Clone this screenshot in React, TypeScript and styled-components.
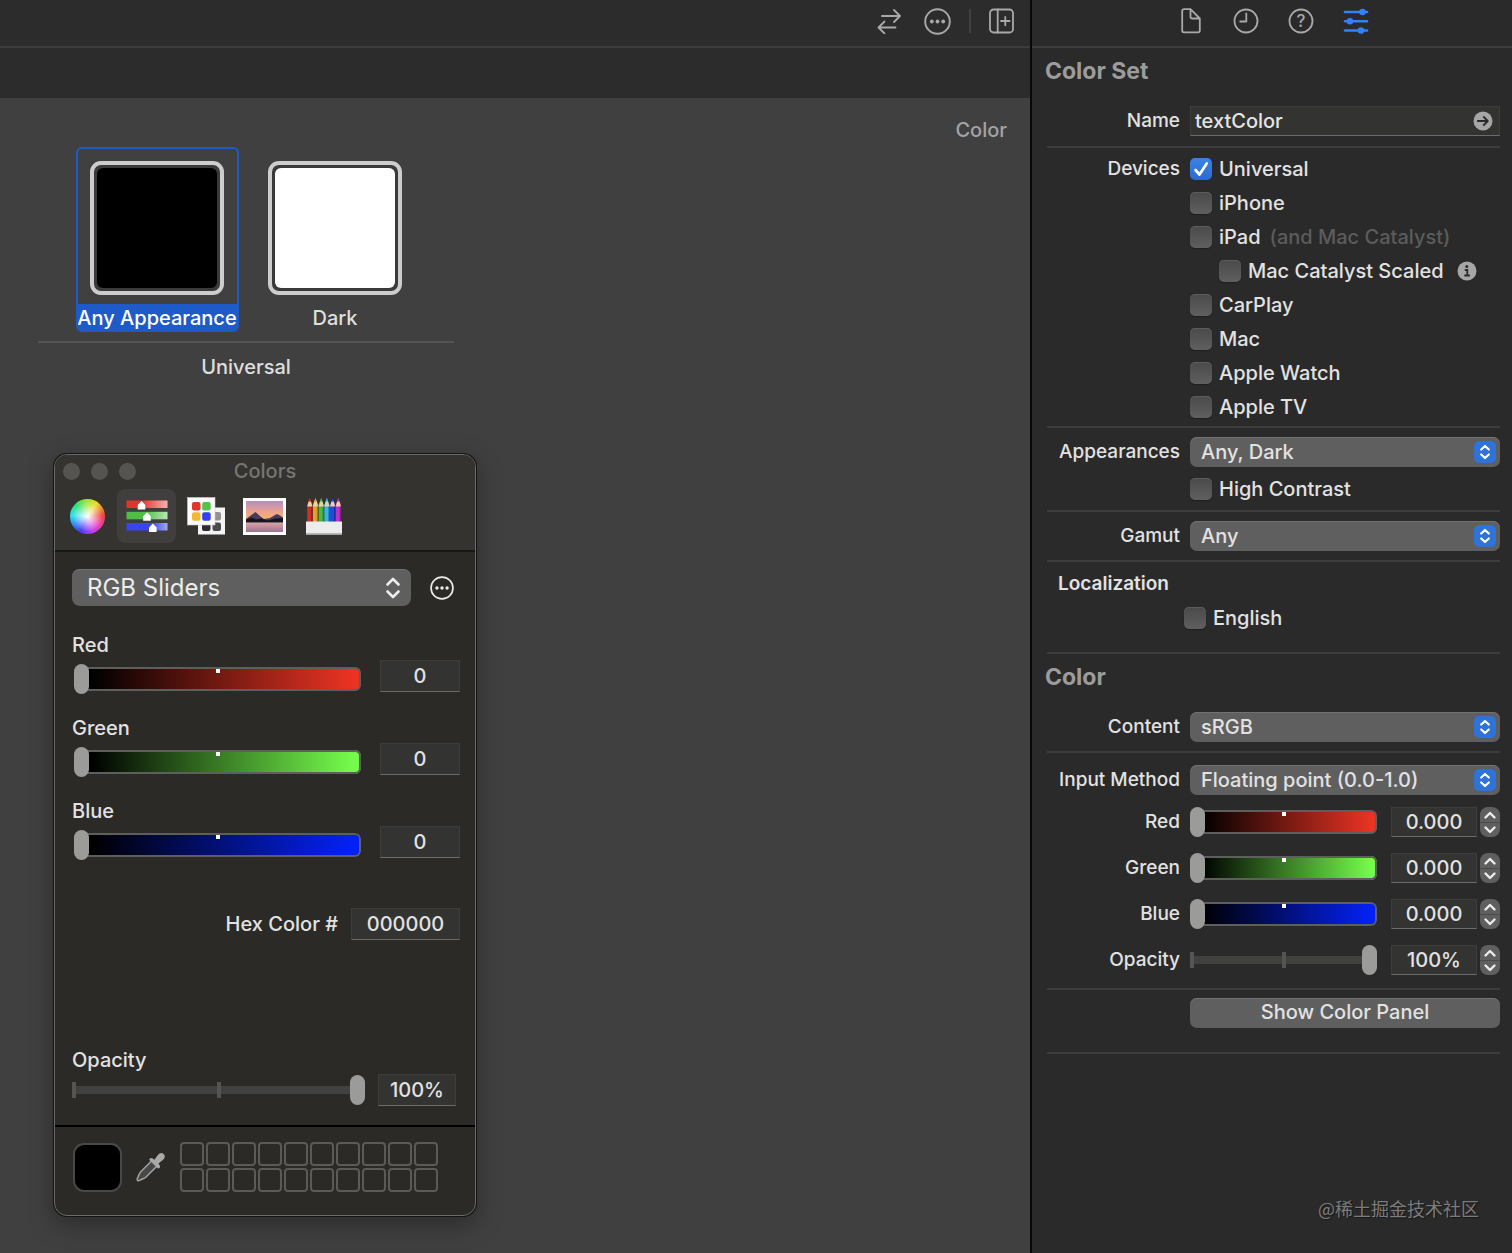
import React, { useId, useState } from "react";
import styled, { createGlobalStyle, css } from "styled-components";

const GlobalStyle = createGlobalStyle`
  *, *::before, *::after { box-sizing: border-box; }
  body {
    margin: 0;
    background: #404040;
    color: #e2e2e2;
    font-family: Inter, "Noto Sans CJK SC", "Liberation Sans", sans-serif;
    font-size: 20px;
    font-weight: 500;
    line-height: 24px;
  }
  button, input, select {
    margin: 0;
    padding: 0;
    border: 0;
    background: none;
    color: inherit;
    font: inherit;
  }
  svg { display: block; }
`;

/* ---------- Shell ---------- */

const Window = styled.div`
  display: flex;
  min-height: 100vh;
`;

const Editor = styled.main`
  flex: 1;
  min-width: 0;
  display: flex;
  flex-direction: column;
`;

const EditorToolbar = styled.header`
  display: flex;
  align-items: center;
  justify-content: flex-end;
  gap: 18px;
  height: 48px;
  padding: 0 16px 4px 16px;
  background: #2c2c2c;
  border-bottom: 2px solid #3c3c3c;
`;

const ToolbarDivider = styled.span`
  width: 2px;
  height: 24px;
  background: #404040;
`;

const JumpBar = styled.div`
  height: 50px;
  background: #2c2c2c;
`;

const Canvas = styled.section`
  flex: 1;
  background: #404040;
  padding-top: 20px;
`;

const CanvasTitle = styled.h1`
  margin: 0 23px 5px;
  text-align: right;
  font-size: 20px;
  font-weight: 500;
  line-height: 24px;
  color: #a3a3a3;
`;

const IconButton = styled.button<{ $width: number; $active?: boolean }>`
  display: flex;
  justify-content: center;
  width: ${(p) => p.$width}px;
  color: ${(p) => (p.$active ? "#3380f7" : "#a9a9a9")};
`;

/* ---------- Color wells ---------- */

const WellGroup = styled.div`
  width: 416px;
  margin-left: 38px;
  text-align: center;
`;

const WellRow = styled.div`
  display: flex;
  justify-content: center;
  gap: 15px;
  padding-bottom: 9px;
  border-bottom: 2px solid #555555;
`;

const Well = styled.button<{ $selected: boolean }>`
  display: flex;
  flex-direction: column;
  justify-content: space-between;
  align-items: center;
  width: 163px;
  height: 185px;
  padding-top: 12px;
  border: 2px solid ${(p) => (p.$selected ? "#1f5bc8" : "transparent")};
  border-bottom-width: 0;
  border-radius: 6px;
  overflow: hidden;
`;

const WellColor = styled.span<{ $color: string }>`
  width: 134px;
  height: 134px;
  padding: 3px;
  border: 4px solid #cdcdcd;
  border-radius: 11px;
  background: #3a3a3a;

  &::before {
    content: "";
    display: block;
    height: 100%;
    border-radius: 6px;
    background: ${(p) => p.$color};
  }
`;

const WellName = styled.span<{ $selected: boolean }>`
  display: flex;
  align-items: center;
  justify-content: center;
  align-self: stretch;
  height: 28px;
  white-space: nowrap;
  color: ${(p) => (p.$selected ? "#ffffff" : "#dedede")};
  background: ${(p) => (p.$selected ? "#1f5bc8" : "transparent")};
`;

const WellCaption = styled.p`
  margin: 12px 0 0;
  color: #dedede;
`;

/* ---------- Shared form controls ---------- */

const Stack = styled.span`
  display: grid;
  align-items: center;

  & > * { grid-area: 1 / 1; }
  & > svg { pointer-events: none; }
`;

const CheckInput = styled.input`
  appearance: none;
  width: 22px;
  height: 22px;
  border-radius: 5px;
  background: linear-gradient(#4a4a4a, #5f5f5f);
  box-shadow: inset 0 1px 0 #5c5c5c, 0 1px 1px #1f1f1f;

  &:checked {
    background: linear-gradient(#3a82e6, #2b6bd0);
    box-shadow: none;
  }
  &:not(:checked) + svg { visibility: hidden; }
`;

const CheckLabel = styled.label`
  display: inline-flex;
  align-items: center;
  gap: 7px;
  height: 34px;
  white-space: nowrap;
`;

const SelectInput = styled.select<{ $large?: boolean }>`
  appearance: none;
  width: 100%;
  height: ${(p) => (p.$large ? 37 : 30)}px;
  padding-left: ${(p) => (p.$large ? 15 : 11)}px;
  border-radius: ${(p) => (p.$large ? 8 : 7)}px;
  background: #5f5f5f;
  box-shadow: inset 0 1px 0 #727272;
  font-size: ${(p) => (p.$large ? 24 : 20)}px;
  font-weight: ${(p) => (p.$large ? 400 : 500)};
`;

const SelectBadge = styled.svg`
  justify-self: end;
  margin-right: 4px;
`;

const fieldLook = css`
  border: 1px solid #3d3d3c;
  border-bottom: 1px solid #6c6c6a;
  background: #333332;
`;

const ValueInput = styled.input<{ $width: number; $height: number }>`
  ${fieldLook}
  width: ${(p) => p.$width}px;
  height: ${(p) => p.$height}px;
  text-align: center;
`;

const thumb = css`
  appearance: none;
  width: 15px;
  height: 30px;
  border-radius: 8px;
  background: #9b9b9a;
`;

const ColorRange = styled.input<{ $to: string }>`
  appearance: none;
  flex: 1;
  min-width: 0;
  height: 30px;

  &::-webkit-slider-runnable-track {
    height: 24px;
    border-radius: 6px;
    background:
      linear-gradient(#ffffff, #ffffff) center top / 4px 6px no-repeat,
      linear-gradient(to right, #000000 6%, ${(p) => p.$to} 97%);
    box-shadow: inset 0 0 0 2px #5e5e5c;
  }
  &::-webkit-slider-thumb {
    ${thumb}
    margin-top: -3px;
  }
`;

const OpacityRange = styled.input`
  appearance: none;
  flex: 1;
  min-width: 0;
  height: 30px;

  &::-webkit-slider-runnable-track {
    height: 16px;
    background:
      linear-gradient(#545453, #545453) left center / 4px 16px no-repeat,
      linear-gradient(#545453, #545453) center / 4px 16px no-repeat,
      linear-gradient(#414140, #414140) center / 100% 8px no-repeat;
  }
  &::-webkit-slider-thumb {
    ${thumb}
    margin-top: -7px;
  }
`;

/* ---------- Colors panel ---------- */

const Panel = styled.section`
  width: 422px;
  margin: 75px 0 37px 54px;
  border: 1px solid #6a6a67;
  border-radius: 13px;
  background: #2b2a27;
  box-shadow: 0 0 0 1px #141414, 0 8px 26px rgba(0, 0, 0, 0.35);
  overflow: hidden;
`;

const PanelHeader = styled.header`
  padding-bottom: 7px;
  background: #343330;
  border-bottom: 2px solid #161614;
`;

const TitleBar = styled.div`
  display: grid;
  grid-template-columns: 1fr auto 1fr;
  align-items: center;
  height: 32px;
  padding: 0 8px;
  margin-bottom: 2px;
`;

const TrafficLights = styled.div`
  display: flex;
  gap: 11px;
`;

const TrafficLight = styled.button`
  width: 17px;
  height: 17px;
  border-radius: 50%;
  background: #555451;
`;

const PanelTitle = styled.h2`
  margin: 0;
  font-size: 20px;
  font-weight: 500;
  line-height: 24px;
  color: #767573;
`;

const ModeTabs = styled.div`
  display: flex;
  padding-left: 3px;
`;

const ModeTab = styled.button<{ $active: boolean }>`
  display: flex;
  align-items: center;
  justify-content: center;
  width: 59px;
  height: 54px;
  border-radius: 8px;
  background: ${(p) => (p.$active ? "#403f3d" : "transparent")};
`;

const Wheel = styled.span`
  width: 35px;
  height: 35px;
  border-radius: 50%;
  background:
    radial-gradient(circle, #ffffff 0%, rgba(255, 255, 255, 0.65) 22%, rgba(255, 255, 255, 0) 62%),
    conic-gradient(from 0deg, #a5e52c, #f0d82c 35deg, #f0453a 85deg, #ee3ba8 125deg, #c93cf0 160deg, #4a3cf2 205deg, #2f8cf5 240deg, #2fe3e8 275deg, #2fe07a 315deg, #a5e52c 360deg);
`;

const PanelBody = styled.div`
  padding: 17px 15px 19px 17px;
  border-bottom: 2px solid #000000;
`;

const ModeRow = styled.div`
  display: flex;
  align-items: center;
  gap: 19px;
  padding-right: 6px;
  margin-bottom: 27px;
  color: #ececea;

  & > ${Stack} { flex: 1; }
`;

const Channels = styled.div`
  display: grid;
  gap: 22px;
`;

const ChannelLabel = styled.label`
  display: block;
`;

const ChannelRow = styled.div`
  display: flex;
  align-items: flex-start;
  gap: 19px;
  padding-left: 2px;
  margin-top: 3px;

  & > ${ColorRange} { align-self: flex-end; margin-top: 4px; }
`;

const HexRow = styled.div`
  display: flex;
  align-items: center;
  justify-content: flex-end;
  gap: 13px;
  margin: 48px 0 108px;
`;

const OpacityRow = styled.div`
  display: flex;
  align-items: center;
  gap: 13px;
  padding-right: 4px;
  margin-top: 2px;
`;

const PanelFooter = styled.footer`
  display: flex;
  align-items: center;
  gap: 14px;
  padding: 15px 18px 23px;
`;

const CurrentColor = styled.button`
  width: 49px;
  height: 49px;
  border: 2px solid #484846;
  border-radius: 11px;
  background: #000000;
`;

const SavedColors = styled.div`
  display: grid;
  grid-template-columns: repeat(10, 24px);
  gap: 2px;
`;

const SavedColor = styled.button`
  height: 24px;
  border: 2px solid #5a5a57;
  border-radius: 4px;
`;

/* ---------- Inspector ---------- */

const Inspector = styled.aside`
  display: flex;
  flex-direction: column;
  width: 482px;
  border-left: 2px solid #080808;
  background: #2a2a2a;
`;

const InspectorTabs = styled.nav`
  display: flex;
  align-items: center;
  justify-content: center;
  gap: 23px;
  height: 48px;
  padding: 0 0 4px 2px;
  border-bottom: 2px solid #3c3c3c;
`;

const InspectorHeading = styled.h2`
  margin: 0;
  padding-left: 13px;
  font-size: 23px;
  font-weight: 700;
  line-height: 46px;
  color: #9c9c9c;
`;

const Section = styled.div<{ $top: number; $bottom: number }>`
  margin: 0 12px 0 15px;
  padding: ${(p) => p.$top}px 0 ${(p) => p.$bottom}px;
  border-bottom: 2px solid #3d3d3d;
`;

const Row = styled.div<{ $spaceTop?: number }>`
  display: grid;
  grid-template-columns: 133px minmax(0, 1fr);
  column-gap: 10px;
  margin-top: ${(p) => p.$spaceTop ?? 0}px;
`;

const RowLabel = styled.label<{ $height: number }>`
  font-size: 19px;
  line-height: ${(p) => p.$height}px;
  text-align: right;
  white-space: nowrap;
`;

const CheckList = styled.div`
  display: flex;
  flex-direction: column;
  align-items: flex-start;
`;

const CheckItem = styled.div<{ $nested?: boolean }>`
  display: flex;
  align-items: center;
  gap: ${(p) => (p.$nested ? 13 : 9)}px;
  padding-left: ${(p) => (p.$nested ? 29 : 0)}px;
  white-space: nowrap;
`;

const Hint = styled.span`
  color: #5c5c5c;
`;

const NameField = styled.div`
  ${fieldLook}
  display: flex;
  align-items: center;
  height: 30px;
  padding: 0 6px 0 4px;
  color: #a6a6a6;
`;

const NameInput = styled.input`
  flex: 1;
  min-width: 0;
  color: #e4e4e4;
`;

const LocalizationTitle = styled.h3`
  margin: 0;
  padding-left: 11px;
  font-size: 19px;
  font-weight: 600;
  line-height: 34px;
`;

const LanguageRow = styled.div`
  display: flex;
  padding-left: 137px;
`;

const ValueRow = styled.div`
  display: flex;
  align-items: center;
`;

const ValueGroup = styled.div`
  display: flex;
  gap: 3px;
  margin-left: 14px;
`;

const Stepper = styled.div`
  display: grid;
  grid-template-rows: 15px 15px;
  width: 20px;
  border-radius: 8px;
  overflow: hidden;
`;

const StepButton = styled.button`
  display: grid;
  place-items: center;
  background: #5f5f5f;
  color: #ececec;

  & + & { border-top: 1px solid #4a4a4a; }
`;

const PushButton = styled.button`
  height: 30px;
  padding-bottom: 3px;
  border-radius: 7px;
  background: #5f5f5f;
  box-shadow: inset 0 1px 0 #727272;
`;

const Watermark = styled.p`
  margin: auto 33px 33px;
  text-align: right;
  font-family: "Noto Sans CJK SC", sans-serif;
  font-size: 18px;
  font-weight: 400;
  color: #7c7c7c;
  text-shadow: 1px 1px 1px #161616;
`;

/* ---------- Icons ---------- */

const line = { fill: "none", stroke: "currentColor", strokeWidth: 2, strokeLinecap: "round", strokeLinejoin: "round" } as const;

const SwapIcon = () => (
  <svg width="29" height="26" viewBox="0 0 29 26" {...line} strokeWidth={1.8}>
    <path d="M5 8h18M17 2l6 6-6 6M18.500 19.500H1.500M7.500 13.500l-6 6 6 6" />
  </svg>
);

const EllipsisIcon = ({ size }: { size: number }) => (
  <svg width={size} height={size} viewBox="0 0 27 27" {...line}>
    <circle cx="13.500" cy="13.500" r="12.300" strokeWidth={1.900} />
    <g fill="currentColor" stroke="none">
      <circle cx="7.800" cy="13.500" r="1.900" />
      <circle cx="13.500" cy="13.500" r="1.900" />
      <circle cx="19.200" cy="13.500" r="1.900" />
    </g>
  </svg>
);

const AddPaneIcon = () => (
  <svg width="25" height="26" viewBox="0 0 25 26" {...line} strokeWidth={1.8}>
    <rect x="1" y="1.500" width="23" height="23" rx="3.500" />
    <path d="M8.700 1.500v23M16.300 8.800v8.500M12 13h8.600" />
  </svg>
);

const FileIcon = () => (
  <svg width="20" height="26" viewBox="0 0 20 26" {...line} strokeWidth={1.800}>
    <path d="M9.500 1.200H3A1.800 1.800 0 0 0 1.200 3v19.500a1.800 1.800 0 0 0 1.800 1.800h14a1.800 1.800 0 0 0 1.800-1.800V10.500L9.500 1.200v7.500a1.800 1.800 0 0 0 1.800 1.800h7.500" />
  </svg>
);

const ClockIcon = () => (
  <svg width="26" height="26" viewBox="0 0 26 26" {...line} strokeWidth={1.800}>
    <circle cx="13" cy="13" r="11.500" />
    <path d="M13.300 5.500v8H7.200" />
  </svg>
);

const HelpIcon = () => (
  <svg width="26" height="26" viewBox="0 0 26 26">
    <circle cx="13" cy="13" r="11.500" fill="none" stroke="currentColor" strokeWidth="1.800" />
    <text x="13" y="19" textAnchor="middle" fontSize="17" fontWeight="500" fill="currentColor">?</text>
  </svg>
);

const AttributesIcon = () => (
  <svg width="26" height="26" viewBox="0 0 26 26" {...line} strokeWidth={2.600}>
    <path d="M2 4h22M2 13.200h22M2 22.500h22" />
    <g fill="currentColor" stroke="none">
      <circle cx="19.500" cy="4" r="3.300" />
      <circle cx="7" cy="13.200" r="3.300" />
      <circle cx="18" cy="22.500" r="3.300" />
    </g>
  </svg>
);

const GoIcon = () => (
  <svg width="20" height="20" viewBox="0 0 20 20">
    <circle cx="10" cy="10" r="9.500" fill="currentColor" />
    <path d="M4.800 10h10M10.800 6l4 4-4 4" fill="none" stroke="#2a2a2a" strokeWidth="1.800" strokeLinecap="round" strokeLinejoin="round" />
  </svg>
);

const InfoIcon = () => (
  <svg width="20" height="20" viewBox="0 0 20 20">
    <circle cx="10" cy="10" r="9.500" fill="#a6a6a6" />
    <circle cx="9.800" cy="5.600" r="1.500" fill="#2a2a2a" />
    <path d="M7.800 9h2.500v5.200M7.300 14.500h5.600" fill="none" stroke="#2a2a2a" strokeWidth="1.800" />
  </svg>
);

const CheckMark = () => (
  <svg width="22" height="22" viewBox="0 0 22 22" {...line} stroke="#ffffff" strokeWidth={2.700}>
    <path d="M5.500 12l4 4.500 7.200-11" />
  </svg>
);

const BlueChevrons = () => (
  <SelectBadge width="22" height="22" viewBox="0 0 22 22">
    <rect width="22" height="22" rx="5" fill="#2f72d8" />
    <path d="M7.200 8.500l3.800-3.500 3.800 3.500M7.200 13.500l3.800 3.500 3.800-3.500" {...line} stroke="#ffffff" strokeWidth={2.200} />
  </SelectBadge>
);

const PlainChevrons = () => (
  <SelectBadge width="28" height="24" viewBox="0 0 28 24">
    <path d="M8.500 8.500l5.500-5.500 5.500 5.500M8.500 15.500l5.500 5.500 5.500-5.500" {...line} stroke="#ececea" strokeWidth={2.600} />
  </SelectBadge>
);

const StepIcon = ({ up }: { up?: boolean }) => (
  <svg width="14" height="10" viewBox="0 0 14 10" {...line} strokeWidth={2.400}>
    <path d={up ? "M2.500 7.500L7 3l4.500 4.500" : "M2.500 2.500L7 7l4.500-4.500"} />
  </svg>
);

const SliderModeIcon = () => (
  <svg width="42" height="32" viewBox="0 0 42 32">
    <defs>
      <linearGradient id="modeRed"><stop offset=".35" stopColor="#e5322a" /><stop offset="1" stopColor="#f3b3b0" /></linearGradient>
      <linearGradient id="modeGreen"><stop offset=".45" stopColor="#50bd45" /><stop offset="1" stopColor="#b6e8b2" /></linearGradient>
      <linearGradient id="modeBlue"><stop offset=".6" stopColor="#3b45ee" /><stop offset="1" stopColor="#a3a8ec" /></linearGradient>
    </defs>
    <rect x="0.500" y="0.500" width="41" height="7.500" fill="url(#modeRed)" />
    <rect x="0.500" y="11.800" width="41" height="7.500" fill="url(#modeGreen)" />
    <rect x="0.500" y="23" width="41" height="7.500" fill="url(#modeBlue)" />
    <g fill="#ffffff">
      <path d="M15.500 1l3.800 4v4.500h-7.600V5z" />
      <path d="M21 12.300l3.800 4v4.500h-7.600v-4.500z" />
      <path d="M26.800 23.500l3.800 4V32H23v-4.500z" />
    </g>
  </svg>
);

const PaletteIcon = () => (
  <svg width="38" height="38" viewBox="0 0 38 38">
    <rect x="11" y="10.500" width="27" height="27" fill="#f4f4f4" />
    <rect x="15" y="25.500" width="8.500" height="8.500" rx="2" fill="#2d2d2d" />
    <rect x="25.500" y="25.500" width="8.500" height="8.500" rx="2" fill="#4a4a4a" />
    <rect x="25.500" y="15" width="8.500" height="8.500" rx="2" fill="#929292" />
    <rect x="0.500" y="0.500" width="27.500" height="27.500" fill="#fdfdfd" stroke="#c9c9c9" strokeWidth="0.600" />
    <rect x="5" y="5" width="8.500" height="8.500" rx="2" fill="#e2352b" />
    <rect x="15.200" y="5" width="8.500" height="8.500" rx="2" fill="#55c24a" />
    <rect x="5" y="15.200" width="8.500" height="8.500" rx="2" fill="#f3b831" />
    <rect x="15.200" y="15.200" width="8.500" height="8.500" rx="2" fill="#3442ee" />
  </svg>
);

const PhotoIcon = () => (
  <svg width="43" height="37" viewBox="0 0 43 37">
    <defs>
      <linearGradient id="sky" x2="0" y2="1"><stop offset="0" stopColor="#b08fc0" /><stop offset=".45" stopColor="#e9a093" /><stop offset=".9" stopColor="#fbb660" /></linearGradient>
      <linearGradient id="lake" x2="0" y2="1"><stop offset="0" stopColor="#dca3a6" /><stop offset="1" stopColor="#9d7391" /></linearGradient>
    </defs>
    <rect width="43" height="37" fill="#ffffff" />
    <rect x="3" y="3" width="37" height="22" fill="url(#sky)" />
    <path d="M3 21l4-3 5.500-4 5 4.500 3.500 2.500 6-1 5-3 2-1 3 1.500 3 2V25H3z" fill="#4a3a5c" />
    <path d="M3 21.500l6-2 4 2 5-1 7 2 7-2 8-.5v4.500H3z" fill="#15151f" />
    <rect x="3" y="24.500" width="37" height="9.500" fill="url(#lake)" />
  </svg>
);

const PENCILS = ["#cf2d27", "#e3a32b", "#4cb93c", "#35b6e2", "#2447e0", "#b933c9"];

const PencilsIcon = () => (
  <svg width="36" height="38" viewBox="0 0 36 38">
    {PENCILS.map((color, i) => (
      <g key={color} transform={`translate(${1.2 + i * 5.7} 0)`}>
        <path d="M2.600 1L5.200 8v17H0V8z" fill={color} />
        <path d="M1.500 4.200h2.200L5.200 9.500H0z" fill="#f0cfa4" />
        <path d="M2.600 1l1.200 3.500H1.400z" fill={color} />
        <path d="M4 9.500h1.200V25H4z" fill="#000000" opacity="0.300" />
      </g>
    ))}
    <rect x="0" y="24.500" width="36" height="13" fill="#ececec" />
    <rect x="0" y="36" width="36" height="1.500" fill="#b5b5b5" />
  </svg>
);

const EyedropperIcon = () => (
  <svg width="30" height="30" viewBox="0 0 30 30">
    <path d="M16 8.500L4.500 20c-1 1-1.500 2.800-2.200 4.200L1.200 27c-.4 1 .8 2.200 1.800 1.600l2.800-1.300c1.500-.7 3-1.100 4-2.100L21.500 13.500z" fill="#484846" stroke="#a3a3a1" strokeWidth="1.500" />
    <path d="M13.800 6.600c.8-.9 2-.9 2.900-.2l1.700 1.400 3.500-4.800c1.600-2.100 4-2.700 5.800-1 1.800 1.800 1.300 4.300-.8 6l-4.500 3.600 1.200 1.600c.7.900.6 2-.2 2.900-.7.600-1.500.5-2.100-.1l-7.500-7.400c-.6-.6-.6-1.400 0-2z" fill="#a9a9a7" />
  </svg>
);

/* ---------- Parts ---------- */

interface SelectProps {
  id?: string;
  label?: string;
  options: string[];
  large?: boolean;
}

const PopUp = ({ id, label, options, large }: SelectProps) => (
  <Stack>
    <SelectInput id={id} aria-label={label} $large={large}>
      {options.map((option) => (
        <option key={option}>{option}</option>
      ))}
    </SelectInput>
    {large ? <PlainChevrons /> : <BlueChevrons />}
  </Stack>
);

const CheckBox = ({ label, checked }: { label: string; checked?: boolean }) => (
  <CheckLabel>
    <Stack>
      <CheckInput type="checkbox" defaultChecked={checked} />
      <CheckMark />
    </Stack>
    {label}
  </CheckLabel>
);

const SelectRow = ({ label, options }: { label: string; options: string[] }) => {
  const id = useId();
  return (
    <Row>
      <RowLabel htmlFor={id} $height={30}>{label}</RowLabel>
      <PopUp id={id} options={options} />
    </Row>
  );
};

const CHANNELS = [
  { name: "Red", color: "#ea3323" },
  { name: "Green", color: "#75fb4c" },
  { name: "Blue", color: "#0421f5" },
];

const InspectorSlider = ({ name, color, first }: { name: string; color?: string; first?: boolean }) => {
  const id = useId();
  return (
    <Row $spaceTop={first ? 12 : 16}>
      <RowLabel htmlFor={id} $height={30}>{name}</RowLabel>
      <ValueRow>
        {color ? (
          <ColorRange id={id} type="range" min={0} max={1} step={0.001} defaultValue={0} $to={color} />
        ) : (
          <OpacityRange id={id} type="range" min={0} max={100} defaultValue={100} />
        )}
        <ValueGroup>
          <ValueInput $width={86} $height={30} aria-label={`${name} value`} defaultValue={color ? "0.000" : "100%"} />
          <Stepper>
            <StepButton aria-label={`Increase ${name}`}><StepIcon up /></StepButton>
            <StepButton aria-label={`Decrease ${name}`}><StepIcon /></StepButton>
          </Stepper>
        </ValueGroup>
      </ValueRow>
    </Row>
  );
};

const MODES = [
  { name: "Color Wheel", icon: <Wheel /> },
  { name: "Color Sliders", icon: <SliderModeIcon /> },
  { name: "Color Palettes", icon: <PaletteIcon /> },
  { name: "Image Palettes", icon: <PhotoIcon /> },
  { name: "Pencils", icon: <PencilsIcon /> },
];

const ColorsPanel = () => {
  const [mode, setMode] = useState("Color Sliders");
  return (
    <Panel aria-label="Colors">
      <PanelHeader>
        <TitleBar>
          <TrafficLights>
            <TrafficLight aria-label="Close" />
            <TrafficLight aria-label="Minimize" />
            <TrafficLight aria-label="Zoom" />
          </TrafficLights>
          <PanelTitle>Colors</PanelTitle>
        </TitleBar>
        <ModeTabs>
          {MODES.map(({ name, icon }) => (
            <ModeTab key={name} aria-label={name} $active={mode === name} onClick={() => setMode(name)}>
              {icon}
            </ModeTab>
          ))}
        </ModeTabs>
      </PanelHeader>
      <PanelBody>
        <ModeRow>
          <PopUp large label="Slider type" options={["RGB Sliders", "HSB Sliders", "CMYK Sliders"]} />
          <button aria-label="Color profile"><EllipsisIcon size={24} /></button>
        </ModeRow>
        <Channels>
          {CHANNELS.map(({ name, color }) => (
            <div key={name}>
              <ChannelLabel htmlFor={`panel-${name}`}>{name}</ChannelLabel>
              <ChannelRow>
                <ColorRange id={`panel-${name}`} type="range" min={0} max={255} defaultValue={0} $to={color} />
                <ValueInput $width={80} $height={32} aria-label={`${name} value`} defaultValue="0" />
              </ChannelRow>
            </div>
          ))}
        </Channels>
        <HexRow>
          <label htmlFor="hex">Hex Color #</label>
          <ValueInput id="hex" $width={109} $height={32} defaultValue="000000" />
        </HexRow>
        <ChannelLabel htmlFor="panel-opacity">Opacity</ChannelLabel>
        <OpacityRow>
          <OpacityRange id="panel-opacity" type="range" min={0} max={100} defaultValue={100} />
          <ValueInput $width={78} $height={32} aria-label="Opacity value" defaultValue="100%" />
        </OpacityRow>
      </PanelBody>
      <PanelFooter>
        <CurrentColor aria-label="Current color" />
        <button aria-label="Pick a color"><EyedropperIcon /></button>
        <SavedColors>
          {Array.from({ length: 20 }, (_, i) => (
            <SavedColor key={i} aria-label={`Saved color ${i + 1}`} />
          ))}
        </SavedColors>
      </PanelFooter>
    </Panel>
  );
};

const WELLS = [
  { name: "Any Appearance", color: "#000000" },
  { name: "Dark", color: "#ffffff" },
];

const ColorSetInspector = () => (
  <Inspector>
    <InspectorTabs>
      <IconButton $width={32} aria-label="File"><FileIcon /></IconButton>
      <IconButton $width={32} aria-label="History"><ClockIcon /></IconButton>
      <IconButton $width={32} aria-label="Help"><HelpIcon /></IconButton>
      <IconButton $width={32} $active aria-label="Attributes"><AttributesIcon /></IconButton>
    </InspectorTabs>

    <InspectorHeading>Color Set</InspectorHeading>
    <Section $top={12} $bottom={10}>
      <Row>
        <RowLabel htmlFor="name" $height={30}>Name</RowLabel>
        <NameField>
          <NameInput id="name" defaultValue="textColor" />
          <button aria-label="Reveal"><GoIcon /></button>
        </NameField>
      </Row>
    </Section>
    <Section $top={4} $bottom={2}>
      <Row>
        <RowLabel as="span" $height={34}>Devices</RowLabel>
        <CheckList>
          <CheckItem><CheckBox label="Universal" checked /></CheckItem>
          <CheckItem><CheckBox label="iPhone" /></CheckItem>
          <CheckItem>
            <CheckBox label="iPad" />
            <Hint>(and Mac Catalyst)</Hint>
          </CheckItem>
          <CheckItem $nested>
            <CheckBox label="Mac Catalyst Scaled" />
            <button aria-label="About scaling"><InfoIcon /></button>
          </CheckItem>
          <CheckItem><CheckBox label="CarPlay" /></CheckItem>
          <CheckItem><CheckBox label="Mac" /></CheckItem>
          <CheckItem><CheckBox label="Apple Watch" /></CheckItem>
          <CheckItem><CheckBox label="Apple TV" /></CheckItem>
        </CheckList>
      </Row>
    </Section>
    <Section $top={9} $bottom={4}>
      <SelectRow label="Appearances" options={["Any, Dark", "None", "Any, Light, Dark"]} />
      <Row $spaceTop={5}>
        <span />
        <CheckList><CheckBox label="High Contrast" /></CheckList>
      </Row>
    </Section>
    <Section $top={9} $bottom={9}>
      <SelectRow label="Gamut" options={["Any", "sRGB and Display P3"]} />
    </Section>
    <Section $top={5} $bottom={17}>
      <LocalizationTitle>Localization</LocalizationTitle>
      <LanguageRow><CheckBox label="English" /></LanguageRow>
    </Section>

    <InspectorHeading>Color</InspectorHeading>
    <Section $top={12} $bottom={9}>
      <SelectRow label="Content" options={["sRGB", "Display P3", "Gray Gamma 2.2"]} />
    </Section>
    <Section $top={12} $bottom={13}>
      <SelectRow label="Input Method" options={["Floating point (0.0-1.0)", "8-bit (0-255)", "8-bit Hexadecimal"]} />
      {CHANNELS.map(({ name, color }, i) => (
        <InspectorSlider key={name} name={name} color={color} first={i === 0} />
      ))}
      <InspectorSlider name="Opacity" />
    </Section>
    <Section $top={8} $bottom={24}>
      <Row>
        <span />
        <PushButton>Show Color Panel</PushButton>
      </Row>
    </Section>
    <Watermark>@稀土掘金技术社区</Watermark>
  </Inspector>
);

export default function App() {
  const [selected, setSelected] = useState("Any Appearance");
  return (
    <>
      <GlobalStyle />
      <Window>
        <Editor>
          <EditorToolbar>
            <IconButton $width={29} aria-label="Code review"><SwapIcon /></IconButton>
            <IconButton $width={27} aria-label="Editor options"><EllipsisIcon size={27} /></IconButton>
            <ToolbarDivider />
            <IconButton $width={25} aria-label="Add editor"><AddPaneIcon /></IconButton>
          </EditorToolbar>
          <JumpBar />
          <Canvas>
            <CanvasTitle>Color</CanvasTitle>
            <WellGroup>
              <WellRow>
                {WELLS.map(({ name, color }) => (
                  <Well key={name} $selected={name === selected} onClick={() => setSelected(name)}>
                    <WellColor $color={color} />
                    <WellName $selected={name === selected}>{name}</WellName>
                  </Well>
                ))}
              </WellRow>
              <WellCaption>Universal</WellCaption>
            </WellGroup>
            <ColorsPanel />
          </Canvas>
        </Editor>
        <ColorSetInspector />
      </Window>
    </>
  );
}
